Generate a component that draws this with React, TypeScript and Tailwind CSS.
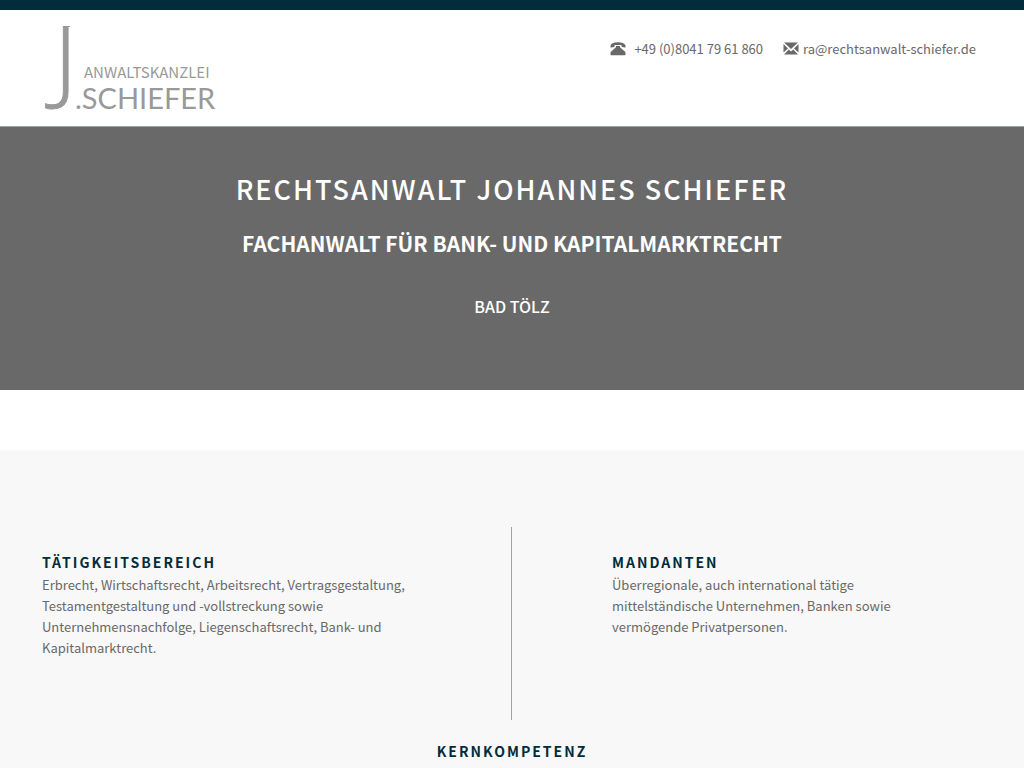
import { ReactNode } from "react";

const Logo = () => (
    <svg className="overflow-visible" width="176" height="90" viewBox="0 0 176 90" fill="#999999" role="img" aria-label="Anwaltskanzlei J. Schiefer">
        <rect x="21" y="4" width="7" height="1" />
        <text x="12" y="70" fontSize="93" fontWeight="300" fontFamily="Open Sans, sans-serif" stroke="#999999" strokeWidth="1">J</text>
        <text x="42" y="56" fontSize="15" fontFamily="Noto Sans CJK SC, sans-serif">ANWALTSKANZLEI</text>
        <text x="33" y="87" fontSize="29" fontFamily="Lato, sans-serif">.SCHIEFER</text>
    </svg>
);

const PhoneIcon = () => (
    <svg width="16" height="14" viewBox="0 0 16 14" fill="currentColor" aria-hidden="true">
        <path d="M0.500 5V3.500C1.500 1.500 4 0.300 8 0.300s6.500 1.200 7.500 3.200V5c0 0.500-0.300 0.700-0.700 0.600l-2.700-0.500c-0.400-0.100-0.600-0.400-0.600-0.800V2.900h-7v1.400c0 0.400-0.200 0.700-0.600 0.800l-2.700 0.500C0.800 5.700 0.500 5.500 0.500 5z" />
        <path d="M6 4h4v1.200l4.800 4.200c0.500 0.400 0.700 0.900 0.700 1.400v1.700c0 0.400-0.300 0.700-0.700 0.700H1.200c-0.400 0-0.700-0.300-0.700-0.700v-1.700c0-0.500 0.200-1 0.700-1.400l4.800-4.200z" />
    </svg>
);

const MailIcon = () => (
    <svg width="16" height="14" viewBox="0 0 16 14" fill="currentColor" aria-hidden="true">
        <path d="M1 0.500h14L8 7z" />
        <path d="M0.500 2l4.500 4.500-4.500 4z" />
        <path d="M15.500 2l-4.500 4.500 4.500 4z" />
        <path d="M5.800 7.500L8 9.500l2.200-2 4.800 5H1z" />
    </svg>
);

const SectionTitle = ({ children }: { children: ReactNode }) => (
    <h3 className="text-sm leading-6 font-semibold tracking-[2px] uppercase text-[#002c3b]">{children}</h3>
);

export default function App() {
    return (
        <div className="bg-white font-['Noto_Sans_CJK_SC',sans-serif] text-[13px] leading-[21px] text-[#696969]">
            {/* header */}
            <header className="flex justify-between items-start border-t-10 border-t-[#002c3b] border-b border-b-[#8fa9ab] pl-[42px] pr-12 pb-3.5">
                <a href="#" className="pt-3">
                    <Logo />
                </a>
                <div className="flex gap-5 pt-[28px]">
                    <a href="tel:+4980417961860" className="flex gap-2 items-center">
                        <PhoneIcon />
                        +49 (0)8041 79 61 860
                    </a>
                    <a href="mailto:ra@rechtsanwalt-schiefer.de" className="flex gap-1 items-center">
                        <MailIcon />
                        ra@rechtsanwalt-schiefer.de
                    </a>
                </div>
            </header>

            <main>
                {/* hero */}
                <section className="bg-[#696969] text-white text-center uppercase pt-[42px] pb-[72px]">
                    <h1 className="text-[27px] leading-10 tracking-[2px] font-medium">Rechtsanwalt Johannes Schiefer</h1>
                    <h2 className="text-[21px] leading-8 mt-[18px] font-semibold">Fachanwalt für Bank- und Kapitalmarktrecht</h2>
                    <p className="text-base leading-6 mt-[35px] font-medium">Bad Tölz</p>
                </section>

                {/* areas */}
                <section className="bg-[#f8f8f8] mt-[60px] pt-[77px] pb-10">
                    <div className="grid grid-cols-2">
                        <div className="border-r border-[#9aa5a9] pl-[42px] pt-[23px] pb-[62px]">
                            <SectionTitle>Tätigkeitsbereich</SectionTitle>
                            <p className="max-w-[370px]">
                                Erbrecht, Wirtschaftsrecht, Arbeitsrecht, Vertragsgestaltung, Testamentgestaltung und -vollstreckung sowie Unternehmensnachfolge, Liegenschaftsrecht, Bank- und Kapitalmarktrecht.
                            </p>
                        </div>
                        <div className="pl-[100px] pr-[42px] pt-[23px]">
                            <SectionTitle>Mandanten</SectionTitle>
                            <p className="max-w-[300px]">
                                Überregionale, auch international tätige mittelständische Unternehmen, Banken sowie vermögende Privatpersonen.
                            </p>
                        </div>
                    </div>
                    <div className="text-center mt-[19px]">
                        <SectionTitle>Kernkompetenz</SectionTitle>
                    </div>
                </section>
            </main>
        </div>
    );
}
